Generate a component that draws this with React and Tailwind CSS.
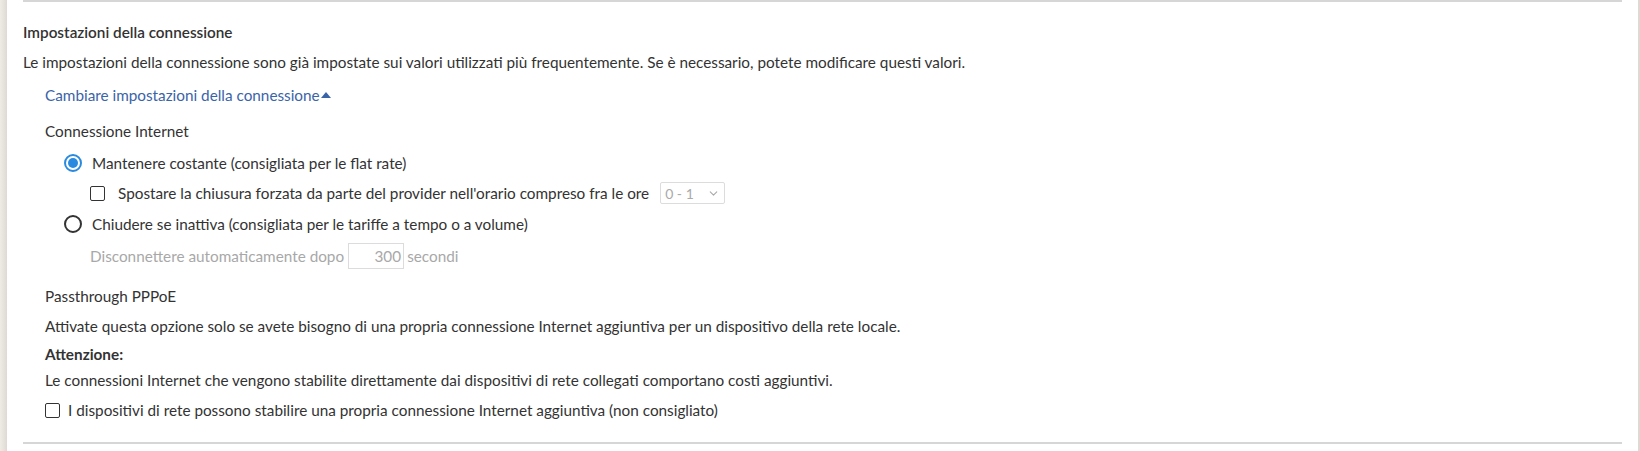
import { ChevronDown } from "lucide-react";

function Radio({ checked }) {
  return (
    <span
      className={`w-[18px] h-[18px] rounded-full border-2 shrink-0 flex items-center justify-center ${
        checked ? "border-[#2a8ae0]" : "border-[#333]"
      }`}
    >
      {checked && <span className="w-[10px] h-[10px] rounded-full bg-[#2a8ae0]" />}
    </span>
  );
}

function Checkbox() {
  return <span className="w-[15px] h-[15px] border border-[#333] rounded-[2px] shrink-0 bg-white" />;
}

export default function App() {
  return (
    <div
      className="w-[1640px] h-[451px] bg-white flex text-[15.3px] text-[#333]"
      style={{ fontFamily: "Lato, 'Liberation Sans', sans-serif" }}
    >
      <div className="w-[7px] bg-gradient-to-r from-[#efece6] to-[#dedad3] shrink-0" />
      <div className="flex-1 pl-[16px] pr-[16px]">
        <div className="border-t-2 border-[#d6d6d6] h-full flex flex-col">
          <div className="flex flex-col pb-[22px] border-b-2 border-[#d6d6d6]">
            <h3 className="font-semibold mt-[20px] h-[20px] leading-[20px]">Impostazioni della connessione</h3>
            <p className="mt-[10px] h-[20px] leading-[20px]">
              Le impostazioni della connessione sono già impostate sui valori utilizzati più frequentemente. Se è necessario, potete modificare questi valori.
            </p>
            <div className="pl-[22px] flex flex-col">
              <a className="mt-[13px] h-[20px] leading-[20px] text-[#3a64a8] flex items-center">
                Cambiare impostazioni della connessione
                <span className="ml-[1px] w-0 h-0 border-l-[5px] border-r-[5px] border-b-[6px] border-l-transparent border-r-transparent border-b-[#3a64a8]" />
              </a>
              <div className="mt-[16px] h-[20px] leading-[20px]">Connessione Internet</div>
              <div className="pl-[19px] flex flex-col">
                <label className="mt-[12px] h-[20px] flex items-center gap-[10px]">
                  <Radio checked />
                  <span>Mantenere costante (consigliata per le flat rate)</span>
                </label>
                <div className="pl-[26px] mt-[9px] h-[22px] flex items-center">
                  <Checkbox />
                  <span className="ml-[13px]">Spostare la chiusura forzata da parte del provider nell'orario compreso fra le ore</span>
                  <span className="ml-[11px] w-[65px] h-[22px] border border-[#dcdcdc] rounded-[2px] flex items-center justify-between pl-[4px] pr-[4px] text-[#aaa] text-[14px]">
                    0 - 1
                    <ChevronDown size={13} strokeWidth={2} className="text-[#aaa]" />
                  </span>
                </div>
                <label className="mt-[10px] h-[20px] flex items-center gap-[10px]">
                  <Radio />
                  <span>Chiudere se inattiva (consigliata per le tariffe a tempo o a volume)</span>
                </label>
                <div className="pl-[26px] mt-[9px] h-[26px] flex items-center text-[#a8a8a8]">
                  <span>Disconnettere automaticamente dopo</span>
                  <span className="ml-[4px] w-[56px] h-[26px] border border-[#dcdcdc] flex items-center justify-end pr-[2px]">300</span>
                  <span className="ml-[3px]">secondi</span>
                </div>
              </div>
              <div className="mt-[17px] h-[20px] leading-[20px]">Passthrough PPPoE</div>
              <p className="mt-[10px] h-[20px] leading-[20px]">
                Attivate questa opzione solo se avete bisogno di una propria connessione Internet aggiuntiva per un dispositivo della rete locale.
              </p>
              <p className="mt-[8px] h-[20px] leading-[20px] font-bold">Attenzione:</p>
              <p className="mt-[6px] h-[20px] leading-[20px]">
                Le connessioni Internet che vengono stabilite direttamente dai dispositivi di rete collegati comportano costi aggiuntivi.
              </p>
              <label className="mt-[10px] h-[20px] flex items-center">
                <Checkbox />
                <span className="ml-[8px]">I dispositivi di rete possono stabilire una propria connessione Internet aggiuntiva (non consigliato)</span>
              </label>
            </div>
          </div>
        </div>
      </div>
      <div className="w-[2px] bg-[#dedad3] shrink-0" />
    </div>
  );
}
